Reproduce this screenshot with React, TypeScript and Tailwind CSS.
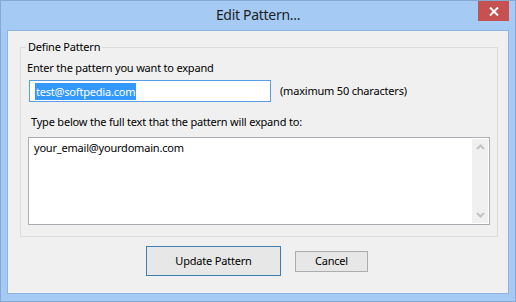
import React from "react";

export default function App() {
  const font = { fontFamily: '"Noto Sans", "Open Sans", sans-serif' };
  const txt = "text-[11px] leading-[16px] tracking-[-0.2px] text-black";
  return (
    <div
      className="w-[516px] h-[302px] bg-[#a5cbf5] border border-[#86a8d4] flex flex-col relative overflow-hidden"
      style={font}
    >
      {/* Title bar */}
      <div className="h-[29px] flex items-center justify-center shrink-0 relative">
        <span className="text-[14px] tracking-[-0.3px] text-[#1e1e1e] leading-none mt-[-1px]">Edit Pattern...</span>
        <div className="absolute top-0 right-[6px] w-[31px] h-[20px] bg-[#c75050] flex items-center justify-center">
          <svg width="10" height="9" viewBox="0 0 10 9">
            <path d="M1 0.5 L9 8.5 M9 0.5 L1 8.5" stroke="#ffffff" strokeWidth="2" />
          </svg>
        </div>
      </div>

      {/* Client area */}
      <div className="ml-[6px] mr-[6px] mb-[7px] flex-1 border border-[#8eb3e0] bg-[#f0f0f0] flex flex-col">
        {/* Group box */}
        <div className="relative mt-[16px] ml-[12px] mr-[10px] h-[190px] border border-[#dcdcdc] flex flex-col">
          <span className={`absolute top-[-9px] left-[5px] px-[2px] bg-[#f0f0f0] ${txt}`}>
            Define Pattern
          </span>
          <div className={`pl-[6px] pt-[12px] ${txt}`}>
            Enter the pattern you want to expand
          </div>
          <div className="flex items-center mt-[4px] ml-[8px]">
            <div className="w-[242px] h-[22px] border border-[#569de5] bg-white flex items-center pl-[5px]">
              <span className="bg-[#3399ff] text-white text-[11px] tracking-[-0.2px] leading-[17px] px-[1px]">test@softpedia.com</span>
            </div>
            <span className={`ml-[9px] ${txt}`}>(maximum 50 characters)</span>
          </div>
          <div className={`pl-[10px] mt-[12px] ${txt}`}>
            Type below the full text that the pattern will expand to:
          </div>
          <div className="ml-[7px] mt-[7px] w-[462px] h-[88px] border border-[#abadb3] bg-white flex">
            <div className={`flex-1 pl-[5px] pt-[2px] ${txt}`}>
              your_email@yourdomain.com
            </div>
            <div className="w-[16px] mr-[1px] my-[1px] bg-[#f0f0f0] flex flex-col justify-between items-center py-[5px]">
              <svg width="9" height="6" viewBox="0 0 9 6">
                <path d="M1 5 L4.5 1.5 L8 5" stroke="#c2c2c2" strokeWidth="2" fill="none" />
              </svg>
              <svg width="9" height="6" viewBox="0 0 9 6">
                <path d="M1 1 L4.5 4.5 L8 1" stroke="#c2c2c2" strokeWidth="2" fill="none" />
              </svg>
            </div>
          </div>
        </div>

        {/* Buttons */}
        <div className="flex items-center mt-[9px] pl-[138px] gap-[14px]">
          <div className="w-[135px] h-[30px] border border-[#3c7fb1] bg-[#e7e7e7] flex items-center justify-center text-[11px] tracking-[-0.2px] text-black">
            Update Pattern
          </div>
          <div className="w-[73px] h-[21px] border border-[#acacac] bg-[#e7e7e7] flex items-center justify-center text-[11px] tracking-[-0.2px] text-black">
            Cancel
          </div>
        </div>
      </div>
    </div>
  );
}
